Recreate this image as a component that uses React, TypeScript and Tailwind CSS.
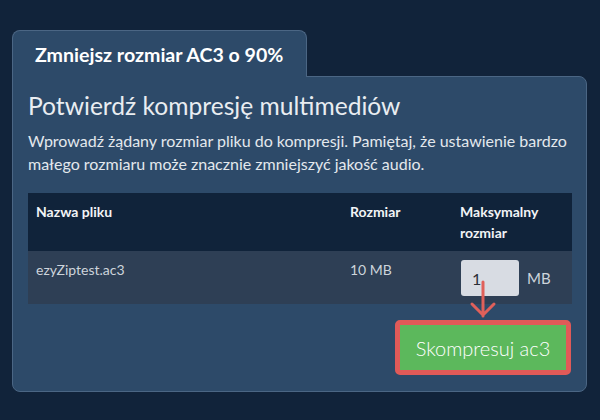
import React from "react";

export default function App() {
  return (
    <div
      className="w-[600px] h-[420px] bg-[#11233a] pt-[30px] pl-[12px] overflow-hidden"
      style={{ fontFamily: "Lato, 'Noto Sans', sans-serif" }}
    >
      <div className="w-[575px] flex flex-col">
        <div className="relative z-10 -mb-px w-[295px] h-[47px] bg-[#2d4a69] border border-b-0 border-[#4b6684] rounded-t-[8px] pl-[22px] pt-[10px]">
          <span className="text-[19.6px] leading-[28px] font-bold text-white">
            Zmniejsz rozmiar AC3 o 90%
          </span>
        </div>
        <div className="h-[316px] bg-[#2d4a69] border border-[#4b6684] rounded-b-[8px] rounded-tr-[8px] px-[15px] pt-[14px] pb-[15px] flex flex-col">
          <h1 className="text-[24.6px] leading-[29px] font-normal text-[#e9edf1]">
            Potwierdź kompresję multimediów
          </h1>
          <p className="mt-[9px] text-[16px] leading-[23px] text-[#e3e8ed]">
            Wprowadź żądany rozmiar pliku do kompresji. Pamiętaj, że ustawienie bardzo małego rozmiaru może znacznie zmniejszyć jakość audio.
          </p>
          <div className="mt-[18px] w-[544px] flex flex-col text-[14px] leading-[21px]">
            <div className="flex bg-[#10233a] h-[58px] font-bold text-[#f2f4f6]">
              <div className="w-[314px] px-[8px] pt-[8px]">Nazwa pliku</div>
              <div className="w-[110px] px-[8px] pt-[8px]">Rozmiar</div>
              <div className="w-[120px] px-[8px] pt-[8px]">Maksymalny rozmiar</div>
            </div>
            <div className="flex bg-[#2e3f55] h-[53px] text-[#cdd4db]">
              <div className="w-[314px] px-[8px] pt-[8px]">ezyZiptest.ac3</div>
              <div className="w-[110px] px-[8px] pt-[8px]">10 MB</div>
              <div className="w-[120px] pl-[9px] pt-[9px] flex items-center gap-[8px] self-start">
                <div className="relative w-[58px] h-[36px] bg-[#d8dce3] rounded-[3px] pl-[11px] flex items-center text-[16px] text-[#2a2f36]">
                  1
                  <svg
                    className="absolute left-[8px] top-[20px] overflow-visible"
                    width="30"
                    height="40"
                    viewBox="0 0 30 40"
                    fill="none"
                  >
                    <path
                      d="M14 2 L14 36 M3 24 L14 35 L25 24"
                      stroke="#e0605a"
                      strokeWidth="3"
                      strokeLinecap="round"
                      strokeLinejoin="round"
                    />
                  </svg>
                </div>
                <span className="text-[15px] text-[#cdd4db]">MB</span>
              </div>
            </div>
          </div>
          <div className="mt-[16px] flex justify-end">
            <button className="w-[176px] h-[55px] bg-[#5cb85c] border-[5px] border-[#e05a58] rounded-[5px] text-white text-[20px] leading-[28px] font-light">
              Skompresuj ac3
            </button>
          </div>
        </div>
      </div>
    </div>
  );
}
